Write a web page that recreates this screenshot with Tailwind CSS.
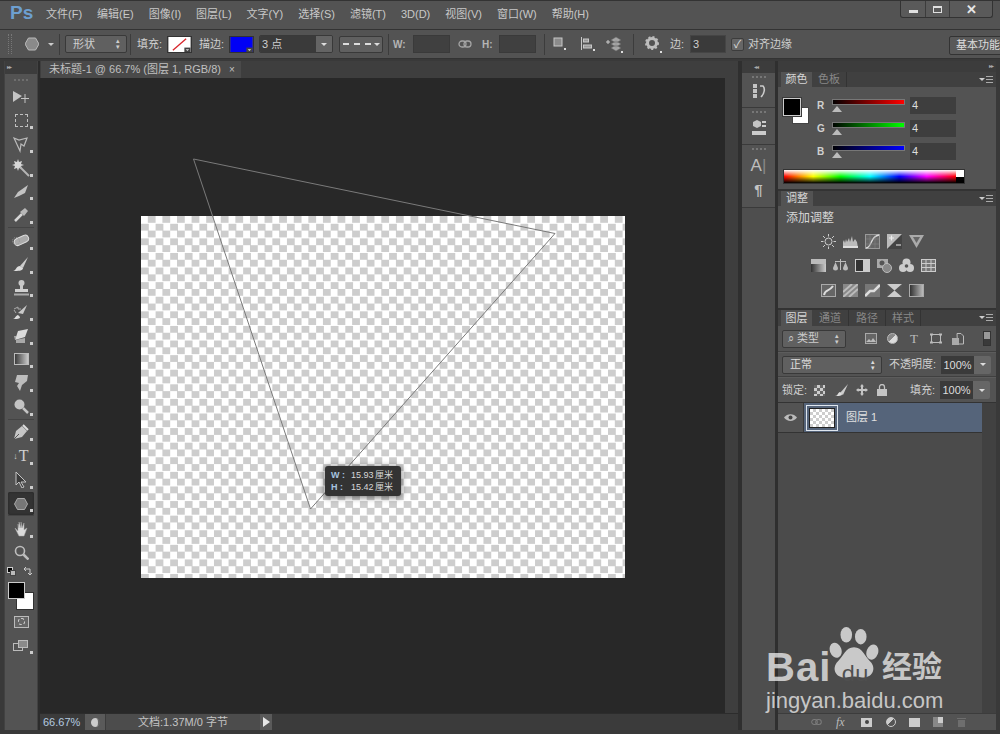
<!DOCTYPE html>
<html lang="zh">
  <head>
    <meta charset="UTF-8" />
    <title>Photoshop</title>
    <script src="https://cdn.jsdelivr.net/npm/@tailwindcss/browser@4"></script>
  </head>
  <body class="bg-[#2f2f2f]">
    <div class="relative w-[1000px] h-[734px] overflow-hidden flex flex-col bg-[#393939] text-[#c4c4c4] text-[11px] font-['Liberation_Sans','Noto_Sans_CJK_SC',sans-serif]">

      <!-- menu bar -->
      <div class="relative h-[29px] shrink-0 flex items-center bg-[#535353] border-t border-[#333]">
        <span class="ml-[10px] w-[36px] text-[19px] leading-none font-bold text-[#6d9fd0] -mt-[5px]">Ps</span>
        <div class="flex gap-[15px] -mt-[1px] text-[#c8c8c8]">
          <span>文件(F)</span><span>编辑(E)</span><span>图像(I)</span><span>图层(L)</span><span>文字(Y)</span><span>选择(S)</span><span>滤镜(T)</span><span>3D(D)</span><span>视图(V)</span><span>窗口(W)</span><span>帮助(H)</span>
        </div>
        <!-- window buttons -->
        <div class="absolute right-[7px] top-0 h-[17px] w-[93px] flex border border-t-0 border-[#333] rounded-b-[3px] bg-[#5a5a5a]">
          <div class="w-[25px] flex items-center justify-center border-r border-[#3c3c3c]"><div class="w-[9px] h-[3px] mt-[4px] bg-[#e0e0e0]"></div></div>
          <div class="w-[24px] flex items-center justify-center border-r border-[#3c3c3c]"><div class="w-[9px] h-[7px] border border-t-2 border-[#e0e0e0]"></div></div>
          <div class="flex-1 flex items-center justify-center text-[#e6e6e6] text-[13px] font-bold leading-none">✕</div>
        </div>
      </div>

      <!-- options bar -->
      <div class="h-[30px] shrink-0 flex items-center bg-[#535353] border-y border-[#333] text-[#cfcfcf]">
        <div class="ml-[8px] w-[4px] h-[20px] border-x border-dotted border-[#777]"></div>
        <svg class="ml-[13px] w-[14px] h-[14px]" viewBox="0 0 14 14"><polygon points="3.5,1 10.5,1 14,7 10.5,13 3.5,13 0,7" fill="#8a8a8a" stroke="#bbb"/></svg>
        <span class="ml-[9px] w-0 h-0 border-x-[3px] border-x-transparent border-t-[3px] border-t-[#ccc]"></span>
        <div class="ml-[5px] h-[21px] w-px bg-[#3c3c3c]"></div>
        <div class="ml-[5px] w-[62px] h-[18px] flex items-center justify-between pl-[7px] pr-[5px] rounded-[2px] border border-[#393939] bg-[#606060]"><span>形状</span><span class="text-[7px] leading-[6px] w-[6px] text-center">▴<br />▾</span></div>
        <div class="ml-[3px] h-[21px] w-px bg-[#3c3c3c]"></div>
        <span class="ml-[6px] w-[30px]">填充:</span>
        <svg class="w-[25px] h-[17px] border border-[#333]" viewBox="0 0 25 17"><rect width="25" height="17" fill="#fff"/><line x1="5" y1="15" x2="20" y2="2" stroke="#d8262c" stroke-width="1.5"/><rect x="18" y="12" width="7" height="5" fill="#444"/><path d="M19.5 14h4l-2 2z" fill="#ddd"/></svg>
        <span class="ml-[7px] w-[30px]">描边:</span>
        <svg class="w-[25px] h-[17px] border border-[#333]" viewBox="0 0 25 17"><rect width="25" height="17" fill="#0000f6"/><rect x="18" y="12" width="7" height="5" fill="#444"/><path d="M19.5 14h4l-2 2z" fill="#ddd"/></svg>
        <div class="ml-[5px] w-[74px] h-[18px] flex rounded-[2px] overflow-hidden border border-[#393939]">
          <div class="flex-1 bg-[#3a3a3a] pl-[2px] leading-[16px]">3 点</div>
          <div class="w-[16px] bg-[#646464] flex items-center justify-center"><span class="w-0 h-0 border-x-[3px] border-x-transparent border-t-[3px] border-t-[#ddd]"></span></div>
        </div>
        <div class="ml-[6px] w-[44px] h-[17px] flex items-center justify-center gap-[3px] rounded-[2px] border border-[#393939] bg-[#606060]">
          <div class="w-[28px] border-t-2 border-dashed border-[#ddd]"></div>
          <span class="w-0 h-0 border-x-[3px] border-x-transparent border-t-[3px] border-t-[#ddd]"></span>
        </div>
        <div class="ml-[5px] h-[21px] w-px bg-[#3c3c3c]"></div>
        <span class="ml-[4px] w-[20px] font-bold text-[10px] text-[#b5b5b5]">W:</span>
        <div class="w-[37px] h-[18px] bg-[#404040] border border-[#3a3a3a]"></div>
        <svg class="ml-[8px] w-[14px] h-[10px]" viewBox="0 0 14 10" fill="none" stroke="#a5a5a5" stroke-width="1.3"><rect x="1" y="2" width="7" height="6" rx="3"/><rect x="6" y="2" width="7" height="6" rx="3"/></svg>
        <span class="ml-[10px] w-[17px] font-bold text-[10px] text-[#b5b5b5]">H:</span>
        <div class="w-[37px] h-[18px] bg-[#404040] border border-[#3a3a3a]"></div>
        <div class="ml-[8px] h-[21px] w-px bg-[#3c3c3c]"></div>
        <svg class="ml-[8px] w-[14px] h-[14px]" viewBox="0 0 14 14"><rect x="1" y="1" width="8" height="8" fill="#8b8b8b" stroke="#c8c8c8"/><rect x="11" y="11" width="2" height="2" fill="#ddd"/></svg>
        <svg class="ml-[13px] w-[15px] h-[14px]" viewBox="0 0 15 14" fill="none" stroke="#c8c8c8"><path d="M1.5 0v13"/><rect x="3.5" y="2" width="5" height="3" fill="#999"/><rect x="3.5" y="8" width="8" height="3" fill="#999"/><rect x="13" y="12" width="2" height="2" fill="#ddd" stroke="none"/></svg>
        <svg class="ml-[11px] w-[18px] h-[17px]" viewBox="0 0 18 17"><path d="M0 6h4M2 4v4" stroke="#ccc"/><path d="M10 1l5 3-5 3-5-3zM10 5l5 3-5 3-5-3zM10 9l5 3-5 3-5-3z" fill="#a5a5a5" stroke="#666" stroke-width=".5"/><rect x="15" y="15" width="2" height="2" fill="#ddd"/></svg>
        <div class="ml-[9px] h-[21px] w-px bg-[#3c3c3c]"></div>
        <svg class="ml-[11px] w-[17px] h-[17px]" viewBox="0 0 17 17"><circle cx="7" cy="7" r="4.5" fill="none" stroke="#bdbdbd" stroke-width="3"/><circle cx="7" cy="7" r="6" fill="none" stroke="#bdbdbd" stroke-width="2" stroke-dasharray="2 2"/><rect x="15" y="15" width="2" height="2" fill="#ddd"/></svg>
        <span class="ml-[8px] w-[20px]">边:</span>
        <div class="w-[36px] h-[18px] bg-[#3a3a3a] border border-[#454545] pl-[2px] leading-[16px]">3</div>
        <div class="ml-[5px] w-[13px] h-[13px] bg-[#666] border border-[#3c3c3c] rounded-[2px] flex items-center justify-center text-[11px] leading-none text-[#ddd]">✓</div>
        <span class="ml-[4px] text-[#cfcfcf]">对齐边缘</span>
        <div class="absolute left-[949px] top-[36px] w-[60px] h-[19px] pl-[6px] leading-[17px] bg-[#595959] border border-[#333] rounded-[2px] text-[#ddd] whitespace-nowrap">基本功能</div>
      </div>

      <!-- work area -->
      <div class="flex-1 flex min-h-0 pt-[2px] pb-[4px]">

        <!-- tools -->
        <div class="ml-[4px] w-[34px] shrink-0 flex flex-col bg-[#535353] border-x border-[#424242]">
          <div class="h-[13px] bg-[#3c3c3c] pl-[2px] text-[6px] leading-[12px] text-[#aaa] tracking-[-1px]">▸▸</div>
          <div class="h-[11px] flex justify-center pt-[5px]"><div class="w-[14px] border-t-2 border-dotted border-[#6e6e6e]"></div></div>

          <div class="relative h-[23.7px] flex items-center justify-center"><svg class="w-[18px] h-[14px]" viewBox="0 0 18 14"><path d="M1 1l9 5-9 6z" fill="#c4c4c4"/><path d="M13 4v9M9 8.500h8" stroke="#c4c4c4"/></svg></div>
          <div class="relative h-[23.7px] flex items-center justify-center"><div class="w-[13px] h-[13px] border border-dashed border-[#c0c0c0]"></div><i class="absolute right-[4px] bottom-[3px] w-[3px] h-[3px] bg-[#ccc]"></i></div>
          <div class="relative h-[23.7px] flex items-center justify-center"><svg class="w-[16px] h-[17px]" viewBox="0 0 16 17" fill="none" stroke="#bbb" stroke-width="1.2"><path d="M1 2l5 2 8-2-3 8-3-2-1 7z"/></svg><i class="absolute right-[4px] bottom-[3px] w-[3px] h-[3px] bg-[#ccc]"></i></div>
          <div class="relative h-[23.7px] flex items-center justify-center"><svg class="w-[18px] h-[18px]" viewBox="0 0 18 18"><path d="M6 0l1 3 3-1-1 3 3 1-3 1 1 3-3-1-1 3-1-3-3 1 1-3-3-1 3-1-1-3 3 1z" fill="#d6d6d6"/><path d="M8 8l9 9" stroke="#b5b5b5" stroke-width="2"/></svg><i class="absolute right-[4px] bottom-[3px] w-[3px] h-[3px] bg-[#ccc]"></i></div>
          <div class="relative h-[23.7px] flex items-center justify-center"><svg class="w-[16px] h-[13px]" viewBox="0 0 16 13"><path d="M1 13l4-6 10-7-3 8-6 3z" fill="#c2c2c2"/></svg><i class="absolute right-[4px] bottom-[3px] w-[3px] h-[3px] bg-[#ccc]"></i></div>
          <div class="relative h-[23.7px] flex items-center justify-center"><svg class="w-[16px] h-[16px]" viewBox="0 0 16 16"><path d="M9 7l-7 7" stroke="#d5d5d5" stroke-width="2.500"/><path d="M7 5l4 4 4-5-3-3z" fill="#b8b8b8"/></svg><i class="absolute right-[4px] bottom-[3px] w-[3px] h-[3px] bg-[#ccc]"></i></div>

          <div class="mx-[3px] mb-px h-px bg-[#444]"></div>

          <div class="relative h-[23.7px] flex items-center justify-center"><svg class="w-[18px] h-[15px]" viewBox="0 0 18 15"><rect x="2" y="4" width="15" height="7" rx="3.500" transform="rotate(-25 9 7.500)" fill="#aaa" stroke="#ddd"/><circle cx="4" cy="8" r="3.500" fill="none" stroke="#999" stroke-dasharray="1 1"/></svg><i class="absolute right-[4px] bottom-[3px] w-[3px] h-[3px] bg-[#ccc]"></i></div>
          <div class="relative h-[23.7px] flex items-center justify-center"><svg class="w-[17px] h-[15px]" viewBox="0 0 17 15"><path d="M7 9l8-9-5 11z" fill="#ccc"/><path d="M0 14c3 0 3-5 7-5l3 2c0 3-5 3-10 3z" fill="#ddd"/></svg><i class="absolute right-[4px] bottom-[3px] w-[3px] h-[3px] bg-[#ccc]"></i></div>
          <div class="relative h-[23.7px] flex items-center justify-center"><svg class="w-[15px] h-[16px]" viewBox="0 0 15 16"><circle cx="7.500" cy="3" r="3" fill="#c8c8c8"/><rect x="6" y="4" width="3" height="6" fill="#c8c8c8"/><rect x="1" y="9" width="13" height="3" fill="#d0d0d0"/><rect x="0" y="13.500" width="15" height="2" fill="#aaa"/></svg><i class="absolute right-[4px] bottom-[3px] w-[3px] h-[3px] bg-[#ccc]"></i></div>
          <div class="relative h-[23.7px] flex items-center justify-center"><svg class="w-[16px] h-[15px]" viewBox="0 0 16 15"><path d="M5 8l9-8-4 9z" fill="#c8c8c8"/><path d="M0 14c2 0 3-4 5-4l2 2c0 2-3 2-7 2z" fill="#ddd"/><path d="M1 4l4-2v2h3M3 8l-2-3" stroke="#aaa" fill="none"/></svg><i class="absolute right-[4px] bottom-[3px] w-[3px] h-[3px] bg-[#ccc]"></i></div>
          <div class="relative h-[23.7px] flex items-center justify-center"><svg class="w-[16px] h-[14px]" viewBox="0 0 16 14"><path d="M5 2l10-2-3 8-10 3z" fill="#dadada"/><path d="M1 7l2-0 0 7h9l0-5-10 2z" fill="#a8a8a8"/></svg><i class="absolute right-[4px] bottom-[3px] w-[3px] h-[3px] bg-[#ccc]"></i></div>
          <div class="relative h-[23.7px] flex items-center justify-center"><div class="w-[15px] h-[12px] border border-[#bbb] bg-[linear-gradient(to_right,#3c3c3c,#c8c8c8)]"></div><i class="absolute right-[4px] bottom-[3px] w-[3px] h-[3px] bg-[#ccc]"></i></div>
          <div class="relative h-[23.7px] flex items-center justify-center"><svg class="w-[16px] h-[16px]" viewBox="0 0 16 16"><path d="M4 0h11l-1 6-5 4-2 6-3-5 2-3-4-1z" fill="#bdbdbd"/></svg><i class="absolute right-[4px] bottom-[3px] w-[3px] h-[3px] bg-[#ccc]"></i></div>
          <div class="relative h-[23.7px] flex items-center justify-center"><svg class="w-[15px] h-[15px]" viewBox="0 0 15 15"><circle cx="5.500" cy="5.500" r="5" fill="#c4c4c4"/><path d="M9 9l5 5" stroke="#c4c4c4" stroke-width="2.500"/></svg><i class="absolute right-[4px] bottom-[3px] w-[3px] h-[3px] bg-[#ccc]"></i></div>

          <div class="mx-[3px] mb-px h-px bg-[#444]"></div>

          <div class="relative h-[23.7px] flex items-center justify-center"><svg class="w-[16px] h-[16px]" viewBox="0 0 16 16"><path d="M1 15l2-8 6-5 5 5-5 6z" fill="#c6c6c6"/><path d="M10 1l5 5" stroke="#ddd" stroke-width="2"/><path d="M1 15l5-5" stroke="#555"/></svg><i class="absolute right-[4px] bottom-[3px] w-[3px] h-[3px] bg-[#ccc]"></i></div>
          <div class="relative h-[23.7px] flex items-center justify-center text-[#cfcfcf] text-[16px] leading-none font-['Liberation_Serif',serif]"><span class="text-[9px] mr-px">↓</span>T<i class="absolute right-[4px] bottom-[3px] w-[3px] h-[3px] bg-[#ccc]"></i></div>
          <div class="relative h-[23.7px] flex items-center justify-center"><svg class="w-[12px] h-[16px]" viewBox="0 0 12 16"><path d="M1 0v13l3-3 3 6 2-1-3-5h5z" fill="#3c3c3c" stroke="#c4c4c4"/></svg><i class="absolute right-[4px] bottom-[3px] w-[3px] h-[3px] bg-[#ccc]"></i></div>
          <div class="relative h-[23.7px] mx-[3px] flex items-center justify-center bg-[#333] rounded-[2px] shadow-[inset_0_0_2px_#222]"><svg class="w-[14px] h-[12px]" viewBox="0 0 14 12"><polygon points="3.500,.5 10.500,.5 13.500,6 10.500,11.500 3.500,11.500 .5,6" fill="#777" stroke="#a8a8a8"/></svg><i class="absolute right-[1px] bottom-[3px] w-[3px] h-[3px] bg-[#ccc]"></i></div>

          <div class="mx-[3px] mb-px h-px bg-[#444]"></div>

          <div class="relative h-[23.7px] flex items-center justify-center"><svg class="w-[15px] h-[16px]" viewBox="0 0 15 16"><path d="M1 7l3 3V3l1 4V1l2 6V1l1 6 2-5v7l3-2-3 8H5z" fill="#dadada" stroke="#aaa" stroke-width=".5"/></svg><i class="absolute right-[4px] bottom-[3px] w-[3px] h-[3px] bg-[#ccc]"></i></div>
          <div class="relative h-[23.7px] flex items-center justify-center"><svg class="w-[15px] h-[15px]" viewBox="0 0 15 15" fill="none" stroke="#bdbdbd"><circle cx="6" cy="6" r="4.500" stroke-width="1.600"/><path d="M9.500 9.500l5 5" stroke-width="2.500"/></svg></div>

          <!-- colours -->
          <div class="relative h-[14px] mt-px">
            <div class="absolute left-[2px] top-[1px] w-[6px] h-[6px] bg-black border border-[#ccc]"></div>
            <div class="absolute left-[5px] top-[4px] w-[6px] h-[6px] bg-[#bbb] border border-[#444]"></div>
            <svg class="absolute left-[18px] top-0 w-[10px] h-[10px]" viewBox="0 0 10 10" fill="none" stroke="#ccc"><path d="M1 3h6v6M1 3l2-2M1 3l2 2M7 9l-2-2M7 9l2-2"/></svg>
          </div>
          <div class="relative h-[30px]">
            <div class="absolute left-[11px] top-[12px] w-[18px] h-[18px] bg-white border border-[#333]"></div>
            <div class="absolute left-[3px] top-[2px] w-[17px] h-[17px] bg-black border border-[#ccc]"></div>
          </div>
          <div class="h-[16px] mt-[4px] flex justify-center items-center"><div class="w-[15px] h-[12px] bg-[#666] border border-[#bbb] flex items-center justify-center"><div class="w-[7px] h-[7px] rounded-full border border-dashed border-[#ddd]"></div></div></div>
          <div class="relative h-[22px] mt-[5px] flex justify-center items-center">
            <div class="relative w-[16px] h-[12px]"><div class="absolute left-0 top-[3px] w-[10px] h-[8px] border border-[#bbb]"></div><div class="absolute left-[5px] top-0 w-[10px] h-[8px] bg-[#8a8a8a] border border-[#bbb]"></div></div>
            <i class="absolute right-[4px] bottom-[3px] w-[3px] h-[3px] bg-[#ccc]"></i>
          </div>
        </div>

        <div class="w-[2px] shrink-0 bg-[#2c2c2c]"></div>

        <!-- document -->
        <div class="w-[698px] shrink-0 flex flex-col">
          <div class="h-[17px] shrink-0 bg-[#3e3e3e]">
            <div class="ml-px w-[200px] h-full flex items-center bg-[#4a4a4a] pl-[8px] text-[#c0c0c0]"><span>未标题-1 @ 66.7% (图层 1, RGB/8)</span><span class="ml-[8px] text-[10px]">×</span></div>
          </div>
          <div class="flex-1 flex min-h-0">
            <div class="relative w-[685px] bg-[#282828] pt-[138px] pl-[101px]">
              <div class="w-[484px] h-[362px] bg-[repeating-conic-gradient(#cdcdcd_0_25%,#ffffff_0_50%)] bg-[length:14.6px_14.6px]"></div>
              <svg class="absolute left-0 top-0 w-[685px] h-[635px]" viewBox="0 0 685 635" fill="none"><polygon points="153.500,81 515,155.500 270.500,431" stroke="#7a7a7a"/></svg>
              <div class="absolute left-[285px] top-[388px] w-[76px] h-[30px] rounded-[3px] bg-[#333] shadow-[0_1px_6px_rgba(0,0,0,.6)] pl-[6px] pt-[3px] text-[9px] leading-[12px] text-[#d8d8d8] whitespace-nowrap">
                <div class="flex"><span class="w-[20px] text-[#a8c4e0] font-bold">W :</span><span class="w-[24px]">15.93</span><span>厘米</span></div>
                <div class="flex"><span class="w-[20px] text-[#a8c4e0] font-bold">H :</span><span class="w-[24px]">15.42</span><span>厘米</span></div>
              </div>
            </div>
            <div class="flex-1 bg-[#3e3e3e]"></div>
          </div>
          <!-- status bar -->
          <div class="h-[17px] shrink-0 flex items-center bg-[#3b3b3b] border-t border-[#2c2c2c]">
            <span class="ml-[3px] w-[42px] text-[#b4cbe0] text-[11px]">66.67%</span>
            <div class="w-[20px] h-full flex items-center justify-center bg-[#5a5a5a]"><div class="w-[9px] h-[9px] rounded-full bg-[#ccc] border-r-2 border-[#666]"></div></div>
            <div class="w-[155px] h-full flex items-center justify-center bg-[#4c4c4c] text-[#c4c4c4] border-l border-[#3c3c3c]">文档:1.37M/0 字节</div>
            <div class="w-[12px] h-full flex items-center justify-center bg-[#5a5a5a]"><span class="w-0 h-0 border-y-[5px] border-y-transparent border-l-[7px] border-l-[#e8e8e8]"></span></div>
          </div>
        </div>

        <div class="w-[4px] shrink-0 bg-[#2f2f2f]"></div>

        <!-- icon dock -->
        <div class="w-[33px] shrink-0 flex flex-col bg-[#4e4e4e]">
          <div class="h-[12px] bg-[#3c3c3c] pl-[12px] text-[6px] leading-[12px] text-[#aaa] tracking-[-1px]">◂◂</div>
          <div class="h-[35px] bg-[#535353] border-b border-[#3a3a3a] flex flex-col items-center">
            <div class="mt-[3px] w-[14px] border-t-2 border-dotted border-[#777]"></div>
            <svg class="mt-[5px] w-[14px] h-[16px]" viewBox="0 0 14 16"><path d="M1 1h4v4H1zM1 6h4v4H1zM1 11h4v4H1z" fill="#c4c4c4"/><path d="M8 3h3c2 2 2 7-2 11" fill="none" stroke="#ccc" stroke-width="1.600"/></svg>
          </div>
          <div class="h-[37px] bg-[#535353] border-b border-[#3a3a3a] flex flex-col items-center">
            <div class="mt-[3px] w-[14px] border-t-2 border-dotted border-[#777]"></div>
            <svg class="mt-[6px] w-[14px] h-[17px]" viewBox="0 0 14 17"><path d="M5 1l4 2v4l-4 2-4-2V3z" fill="#c4c4c4"/><path d="M10 2h4v2h-4zM10 6h4v2h-4z" fill="#ccc"/><rect y="12" width="14" height="4" fill="#ccc"/></svg>
          </div>
          <div class="h-[63px] bg-[#535353] border-b border-[#3a3a3a] flex flex-col items-center">
            <div class="mt-[3px] w-[14px] border-t-2 border-dotted border-[#777]"></div>
            <div class="mt-[6px] text-[17px] leading-[20px] text-[#bdbdbd]">A<span class="font-light text-[#888]">|</span></div>
            <div class="mt-[5px] text-[15px] leading-[18px] text-[#c4c4c4] font-bold">¶</div>
          </div>
        </div>

        <div class="w-[3px] shrink-0 bg-[#2f2f2f]"></div>

        <!-- panels -->
        <div class="relative w-[218px] shrink-0 flex flex-col gap-[2px] bg-[#333]">
          <div class="h-[11px] shrink-0 -mb-[2px] bg-[#3c3c3c] pr-[3px] text-right text-[6px] leading-[11px] text-[#aaa] tracking-[-1px]">▸▸</div>

          <!-- colour panel -->
          <div class="h-[117px] shrink-0 flex flex-col bg-[#535353]">
            <div class="relative h-[15px] shrink-0 flex bg-[#404040] pl-[3px]">
              <div class="w-[31px] text-center leading-[15px] bg-[#535353] text-[#d6d6d6]">颜色</div>
              <div class="w-[35px] text-center leading-[15px] border-r border-[#333] text-[#888]">色板</div>
              <div class="absolute right-[3px] top-[4px] flex items-center gap-px"><span class="w-0 h-0 border-x-[3px] border-x-transparent border-t-[3px] border-t-[#ccc]"></span><div class="w-[7px] h-[7px] border-y border-[#aaa] bg-[linear-gradient(#aaa,#aaa)] bg-[length:100%_1px] bg-center bg-no-repeat"></div></div>
            </div>
            <div class="relative flex-1">
              <div class="absolute left-[14px] top-[20px] w-[17px] h-[17px] bg-white border border-[#444]"></div>
              <div class="absolute left-[5px] top-[11px] w-[18px] h-[18px] bg-black border border-[#ccc] outline outline-[#3a3a3a]"></div>
              <div class="absolute left-[39px] top-[10px] w-[140px] flex flex-col gap-[6px]">
                <div class="h-[17px] flex items-center">
                  <span class="w-[15px] text-[#d0d0d0] font-bold text-[10px]">R</span>
                  <div class="relative -mt-[8px] w-[73px] h-[6px] border border-[#777] bg-[linear-gradient(to_right,#040000,#ff0000)]"><span class="absolute -left-px top-[6px] w-0 h-0 border-x-[5px] border-x-transparent border-b-[6px] border-b-[#bbb]"></span></div>
                  <div class="ml-[5px] w-[46px] h-[17px] bg-[#3e3e3e] pl-[2px] leading-[17px] text-[#ddd]">4</div>
                </div>
                <div class="h-[17px] flex items-center">
                  <span class="w-[15px] text-[#d0d0d0] font-bold text-[10px]">G</span>
                  <div class="relative -mt-[8px] w-[73px] h-[6px] border border-[#777] bg-[linear-gradient(to_right,#000400,#00ff00)]"><span class="absolute -left-px top-[6px] w-0 h-0 border-x-[5px] border-x-transparent border-b-[6px] border-b-[#bbb]"></span></div>
                  <div class="ml-[5px] w-[46px] h-[17px] bg-[#3e3e3e] pl-[2px] leading-[17px] text-[#ddd]">4</div>
                </div>
                <div class="h-[17px] flex items-center">
                  <span class="w-[15px] text-[#d0d0d0] font-bold text-[10px]">B</span>
                  <div class="relative -mt-[8px] w-[73px] h-[6px] border border-[#777] bg-[linear-gradient(to_right,#000004,#0000ff)]"><span class="absolute -left-px top-[6px] w-0 h-0 border-x-[5px] border-x-transparent border-b-[6px] border-b-[#bbb]"></span></div>
                  <div class="ml-[5px] w-[46px] h-[17px] bg-[#3e3e3e] pl-[2px] leading-[17px] text-[#ddd]">4</div>
                </div>
              </div>
              <div class="absolute left-[5px] top-[82px] w-[182px] h-[15px] flex border border-[#333]">
                <div class="flex-1 bg-[linear-gradient(to_right,#f00,#ff0_17%,#0f0_33%,#0ff_50%,#00f_67%,#f0f_83%,#f00)]"><div class="h-full bg-[linear-gradient(#fff,rgba(255,255,255,0)_50%,rgba(0,0,0,0)_50%,#000)]"></div></div>
                <div class="w-[8px] flex flex-col"><div class="flex-1 bg-white"></div><div class="flex-1 bg-black"></div></div>
              </div>
            </div>
          </div>

          <!-- adjustments panel -->
          <div class="h-[117px] shrink-0 flex flex-col bg-[#535353]">
            <div class="relative h-[15px] shrink-0 flex bg-[#404040] pl-[3px]">
              <div class="w-[32px] text-center leading-[15px] bg-[#535353] text-[#d6d6d6]">调整</div>
              <div class="absolute right-[3px] top-[4px] flex items-center gap-px"><span class="w-0 h-0 border-x-[3px] border-x-transparent border-t-[3px] border-t-[#ccc]"></span><div class="w-[7px] h-[7px] border-y border-[#aaa] bg-[linear-gradient(#aaa,#aaa)] bg-[length:100%_1px] bg-center bg-no-repeat"></div></div>
            </div>
            <div class="ml-[8px] mt-[4px] text-[12px] leading-[16px] text-[#d6d6d6]">添加调整</div>
            <div class="mt-[7px] ml-[43px] flex gap-[7px] h-[16px] items-center">
              <svg class="w-[15px] h-[15px]" viewBox="0 0 15 15"><circle cx="7.500" cy="7.500" r="3.500" fill="#555" stroke="#ccc"/><path d="M7.500 0v2.500M7.500 12.500V15M0 7.500h2.500M12.500 7.500H15M2 2l2 2M11 11l2 2M2 13l2-2M11 4l2-2" stroke="#ccc"/></svg>
              <svg class="w-[15px] h-[15px]" viewBox="0 0 15 15"><path d="M0 12V8l1-2 1 3 1-4 1 3 2-4 1 4 2-6 1 6 2-3 2 3 1 6z" fill="#bbb"/><rect y="12" width="15" height="2" fill="#ddd"/></svg>
              <svg class="w-[15px] h-[15px]" viewBox="0 0 15 15"><rect x=".5" y=".5" width="14" height="14" fill="#666" stroke="#999"/><path d="M1 14c6 0 4-12 13-13" fill="none" stroke="#ddd" stroke-width="1.300"/><path d="M5 1v13M10 1v13M1 5h13M1 10h13" stroke="#888" stroke-width=".5"/></svg>
              <svg class="w-[15px] h-[15px]" viewBox="0 0 15 15"><rect width="15" height="15" fill="#bbb"/><path d="M15 0L0 15h15z" fill="#444"/><path d="M2 4h5M4.500 1.500v5M9 11h5" stroke="#eee" stroke-width="1.200"/></svg>
              <svg class="w-[15px] h-[15px]" viewBox="0 0 15 15"><polygon points="0,1 15,1 7.500,14" fill="#aaa"/><polygon points="4,3 11,3 7.500,9" fill="#666"/></svg>
            </div>
            <div class="mt-[8px] ml-[33px] flex gap-[7px] h-[16px] items-center">
              <div class="w-[15px] h-[13px] bg-[linear-gradient(to_right,#333,#ccc)] border-t-[5px] border-[#bbb]"></div>
              <svg class="w-[15px] h-[15px]" viewBox="0 0 15 15" fill="#bbb"><path d="M7 1h1v11h-1zM2 3h11v1H2z"/><path d="M0 10l2.500-6L5 10a2.500 2.500 0 0 1-5 0zM10 10l2.500-6L15 10a2.500 2.500 0 0 1-5 0z"/></svg>
              <div class="w-[15px] h-[13px] border border-[#ccc] bg-[linear-gradient(to_right,#333_50%,#ccc_50%)]"></div>
              <svg class="w-[15px] h-[15px]" viewBox="0 0 15 15"><rect y="1" width="11" height="9" fill="#aaa"/><circle cx="5" cy="5" r="2.500" fill="#555"/><circle cx="10" cy="10" r="4.500" fill="#888" stroke="#bbb"/></svg>
              <svg class="w-[15px] h-[15px]" viewBox="0 0 15 15" fill="#ccc"><circle cx="7.500" cy="4.500" r="4"/><circle cx="4" cy="10" r="4"/><circle cx="11" cy="10" r="4"/><circle cx="7.500" cy="8" r="1.800" fill="#555"/></svg>
              <svg class="w-[15px] h-[13px]" viewBox="0 0 15 13"><rect x=".5" y=".5" width="14" height="12" fill="#777" stroke="#ccc"/><path d="M5 0v13M10 0v13M0 4.500h15M0 8.500h15" stroke="#ccc"/></svg>
            </div>
            <div class="mt-[9px] ml-[43px] flex gap-[7px] h-[16px] items-center">
              <svg class="w-[15px] h-[13px]" viewBox="0 0 15 13"><rect x=".5" y=".5" width="14" height="12" fill="#666" stroke="#aaa"/><path d="M3 11c1-6 5-3 9-9" stroke="#ddd" stroke-width="2" fill="none"/></svg>
              <svg class="w-[15px] h-[13px]" viewBox="0 0 15 13"><rect width="15" height="13" fill="#888"/><path d="M0 13L15 0M0 8L9 0M6 13l9-8" stroke="#bbb" stroke-width="2"/></svg>
              <svg class="w-[15px] h-[13px]" viewBox="0 0 15 13"><rect width="15" height="13" fill="#777"/><path d="M0 12l5-5h4l6-6" stroke="#ddd" stroke-width="2.500" fill="none"/></svg>
              <svg class="w-[15px] h-[13px]" viewBox="0 0 15 13"><rect width="15" height="13" fill="#ccc"/><path d="M0 0l7.500 6.500L0 13zM15 0L7.500 6.500 15 13z" fill="#555"/></svg>
              <div class="w-[15px] h-[13px] border border-[#aaa] bg-[linear-gradient(to_right,#333,#bbb)]"></div>
            </div>
          </div>

          <!-- layers panel -->
          <div class="flex-1 min-h-0 flex flex-col bg-[#535353]">
            <div class="relative h-[16px] shrink-0 flex bg-[#404040] pl-[3px] text-[#888] leading-[16px]">
              <div class="w-[31px] text-center bg-[#535353] text-[#d6d6d6]">图层</div>
              <div class="w-[37px] text-center border-r border-[#333]">通道</div>
              <div class="w-[37px] text-center border-r border-[#333]">路径</div>
              <div class="w-[35px] text-center border-r border-[#333]">样式</div>
              <div class="absolute right-[3px] top-[4px] flex items-center gap-px"><span class="w-0 h-0 border-x-[3px] border-x-transparent border-t-[3px] border-t-[#ccc]"></span><div class="w-[7px] h-[7px] border-y border-[#aaa] bg-[linear-gradient(#aaa,#aaa)] bg-[length:100%_1px] bg-center bg-no-repeat"></div></div>
            </div>
            <!-- filter row -->
            <div class="h-[26px] shrink-0 flex items-center border-b border-[#404040]">
              <div class="ml-[4px] w-[64px] h-[18px] flex items-center justify-between pl-[5px] pr-[5px] rounded-[2px] border border-[#393939] bg-[#606060] text-[#ccc]"><span>⌕ 类型</span><span class="text-[7px] leading-[6px] w-[6px] text-center">▴<br />▾</span></div>
              <svg class="ml-[19px] w-[12px] h-[11px]" viewBox="0 0 12 11"><rect x=".5" y=".5" width="11" height="10" fill="#666" stroke="#aaa"/><path d="M1 9l3-3 2 2 2-3 3 4z" fill="#bbb"/></svg>
              <div class="ml-[10px] w-[11px] h-[11px] rounded-full bg-[linear-gradient(135deg,#888_50%,#ddd_50%)] border border-[#bbb]"></div>
              <span class="ml-[10px] w-[12px] text-center text-[13px] leading-none text-[#bbb] font-['Liberation_Serif',serif]">T</span>
              <svg class="ml-[10px] w-[12px] h-[11px]" viewBox="0 0 12 11" fill="none" stroke="#bbb"><rect x="1.500" y="1.500" width="9" height="8"/><path d="M0 1.500h3M9 1.500h3M0 9.500h3M9 9.500h3" stroke-width="2"/></svg>
              <svg class="ml-[10px] w-[12px] h-[12px]" viewBox="0 0 12 12"><path d="M5 .5h4l2.500 2.500v8h-6z" fill="none" stroke="#bbb"/><rect y="5" width="7" height="7" fill="#aaa"/></svg>
              <div class="ml-[19px] w-[8px] h-[15px] bg-[#3a3a3a] border border-[#333]"><div class="h-[7px] bg-[#999]"></div></div>
            </div>
            <!-- blend row -->
            <div class="h-[25px] shrink-0 flex items-center border-b border-[#404040] border-t border-t-[#5c5c5c]">
              <div class="ml-[4px] w-[100px] h-[18px] flex items-center justify-between pl-[7px] pr-[5px] rounded-[2px] border border-[#393939] bg-[#606060] text-[#ddd]"><span>正常</span><span class="text-[7px] leading-[6px] w-[6px] text-center">▴<br />▾</span></div>
              <span class="ml-[7px] w-[52px] text-[#d0d0d0]">不透明度:</span>
              <div class="w-[33px] h-[18px] bg-[#3a3a3a] text-center leading-[18px] text-[#ddd]">100%</div>
              <div class="w-[17px] h-[18px] flex items-center justify-center bg-[#666] rounded-r-[2px]"><span class="w-0 h-0 border-x-[3px] border-x-transparent border-t-[3px] border-t-[#ddd]"></span></div>
            </div>
            <!-- lock row -->
            <div class="h-[26px] shrink-0 flex items-center border-b border-[#333] border-t border-t-[#5c5c5c]">
              <span class="ml-[4px] w-[32px] text-[#d0d0d0]">锁定:</span>
              <div class="w-[11px] h-[11px] bg-[repeating-conic-gradient(#ccc_0_25%,#666_0_50%)] bg-[length:6px_6px]"></div>
              <svg class="ml-[10px] w-[14px] h-[13px]" viewBox="0 0 14 13"><path d="M5 9l8-9-5 11z" fill="#ccc"/><path d="M0 12c3 0 3-4 5-4l2 2c0 2-3 2-7 2z" fill="#ddd"/></svg>
              <svg class="ml-[7px] w-[12px] h-[12px]" viewBox="0 0 12 12" fill="#c4c4c4"><path d="M6 0l2 2.500H7V5h2.500V4L12 6 9.500 8V7H7v2.500h1L6 12 4 9.500h1V7H2.500v1L0 6l2.500-2v1H5V2.500H4z"/></svg>
              <svg class="ml-[9px] w-[10px] h-[12px]" viewBox="0 0 10 12"><rect y="5" width="10" height="7" fill="#c4c4c4"/><path d="M2.500 5V3a2.500 2.500 0 0 1 5 0v2" fill="none" stroke="#c4c4c4" stroke-width="1.300"/></svg>
              <span class="ml-[23px] w-[30px] text-[#d0d0d0]">填充:</span>
              <div class="w-[33px] h-[18px] bg-[#3a3a3a] text-center leading-[18px] text-[#ddd]">100%</div>
              <div class="w-[17px] h-[18px] flex items-center justify-center bg-[#666] rounded-r-[2px]"><span class="w-0 h-0 border-x-[3px] border-x-transparent border-t-[3px] border-t-[#ddd]"></span></div>
            </div>
            <!-- layer list -->
            <div class="flex-1 min-h-0 flex">
              <div class="w-[204px] flex flex-col bg-[#4b4b4b]">
                <div class="h-[30px] flex items-stretch border-b border-[#333]">
                  <div class="w-[26px] flex items-center justify-center bg-[#535353] border-r border-[#3a3a3a]"><svg class="w-[13px] h-[9px]" viewBox="0 0 13 9"><path d="M0 4.500C3 0 10 0 13 4.500 10 9 3 9 0 4.500z" fill="#bbb"/><circle cx="6.500" cy="4.500" r="2" fill="#444"/></svg></div>
                  <div class="flex-1 flex items-center bg-[#55647a]">
                    <div class="ml-[2px] w-[32px] h-[26px] p-[2px] border border-[#dfe6ee]"><div class="w-full h-full border border-[#222] bg-[repeating-conic-gradient(#cdcdcd_0_25%,#ffffff_0_50%)] bg-[length:6px_6px]"></div></div>
                    <span class="ml-[8px] text-[#e0e0e0]">图层 1</span>
                  </div>
                </div>
              </div>
              <div class="flex-1 bg-[#414141]"></div>
            </div>
            <!-- layer footer -->
            <div class="h-[17px] shrink-0 bg-[#535353] border-t border-[#3c3c3c] flex items-center pl-[32px]">
              <svg class="w-[13px] h-[8px]" viewBox="0 0 14 10" fill="none" stroke="#7c7c7c" stroke-width="1.300"><rect x="1" y="2" width="7" height="6" rx="3"/><rect x="6" y="2" width="7" height="6" rx="3"/></svg>
              <span class="ml-[13px] w-[14px] text-[#bbb] italic text-[12px] leading-none font-['Liberation_Serif',serif]">fx</span>
              <div class="ml-[11px] w-[11px] h-[9px] bg-[#ccc] flex items-center justify-center"><div class="w-[4px] h-[4px] rounded-full bg-[#444]"></div></div>
              <div class="ml-[14px] w-[10px] h-[10px] rounded-full bg-[linear-gradient(135deg,#ccc_50%,#555_50%)] border border-[#ccc]"></div>
              <div class="ml-[13px] w-[11px] h-[9px] bg-[#ccc]"></div>
              <div class="ml-[13px] w-[10px] h-[10px] bg-[#ccc] border-l-[5px] border-b-[4px] border-[#888]"></div>
              <svg class="ml-[14px] w-[9px] h-[10px]" viewBox="0 0 9 10" fill="#6e6e6e"><path d="M0 1h9v1H0zM1 3h7v7H1z"/></svg>
            </div>
          </div>
        </div>
      </div>

      <!-- watermark -->
      <div class="absolute left-[766px] top-[626px] w-[190px] h-[90px] text-white/70 pointer-events-none font-['Liberation_Sans','Noto_Sans_CJK_SC',sans-serif]">
        <span class="absolute left-0 top-[20px] text-[40px] leading-[42px] font-bold tracking-[1px]">Bai</span>
        <svg class="absolute left-[62px] top-[1px] w-[52px] h-[56px]" viewBox="0 0 50 58" fill="#fff" fill-opacity=".7"><ellipse cx="17" cy="8" rx="6" ry="8"/><ellipse cx="32" cy="10" rx="6" ry="8"/><ellipse cx="6" cy="24" rx="6" ry="8" transform="rotate(-20 6 24)"/><ellipse cx="44" cy="26" rx="6" ry="8" transform="rotate(20 44 26)"/><path d="M25 21c9 0 11 10 18 16 6 9-2 17-11 15-5-1-9-1-14 0C9 54 1 46 7 37c7-6 9-16 18-16z"/></svg>
        <span class="absolute left-[71px] top-[32px] w-[36px] text-center text-[22px] leading-[28px] text-[#4f4f4f] font-['Noto_Sans',sans-serif]">du</span>
        <span class="absolute left-[116px] top-[23px] text-[30px] leading-[36px] font-bold whitespace-nowrap">经验</span>
        <span class="absolute left-0 top-[61px] text-[22px] leading-[28px] whitespace-nowrap">jingyan.baidu.com</span>
      </div>
    </div>
  </body>
</html>
